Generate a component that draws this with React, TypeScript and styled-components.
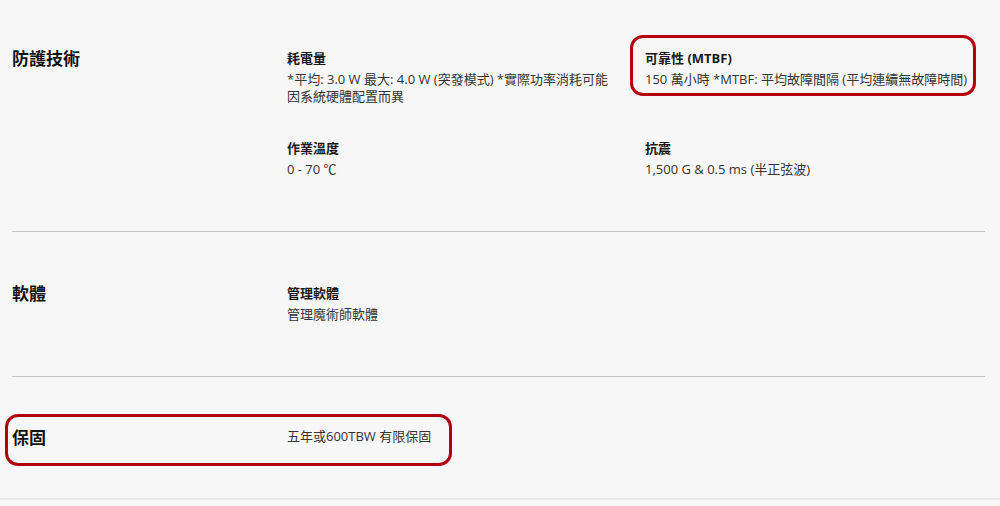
import React from "react";
import styled, { createGlobalStyle } from "styled-components";

const GlobalStyle = createGlobalStyle`
  html, body {
    margin: 0;
    padding: 0;
    background: #f7f7f7;
  }
  body {
    font-family: "Open Sans", "Noto Sans CJK TC", sans-serif;
    color: #222;
  }
`;

const Page = styled.div`
  width: 1000px;
  height: 506px;
  overflow: hidden;
  background: #f7f7f7;
`;

const Content = styled.div`
  padding: 0 15px 0 12px;
`;

const Section = styled.section<{ $top: number; $bottom: number }>`
  display: grid;
  grid-template-columns: 275px 1fr;
  padding: ${(p) => p.$top}px 0 ${(p) => p.$bottom}px;
  position: relative;
`;

const Divider = styled.hr`
  margin: 0;
  border: 0;
  border-top: 1px solid #c4c4c4;
`;

const Title = styled.h3`
  margin: -3px 0 0;
  font-family: "Noto Sans CJK TC", sans-serif;
  font-size: 17px;
  line-height: 24px;
  font-weight: 700;
  color: #111;
`;

const ItemGrid = styled.div`
  display: grid;
  grid-template-columns: 358px 1fr;
  row-gap: 34px;
  align-items: start;
`;

const Item = styled.div<{ $pad?: number }>`
  position: relative;
  padding-right: ${(p) => p.$pad ?? 0}px;
`;

const Label = styled.div`
  font-family: "Open Sans", "Noto Sans CJK TC", sans-serif;
  font-size: 13px;
  line-height: 18px;
  font-weight: 700;
  color: #1a1a1a;
  margin-bottom: 4px;
`;

const Value = styled.div<{ $max?: number }>`
  font-family: "Open Sans", "Noto Sans CJK TC", sans-serif;
  font-size: 13px;
  line-height: 17px;
  color: #333;
  max-width: ${(p) => (p.$max ? `${p.$max}px` : "none")};
`;

const WarrantyValue = styled(Value)`
  align-self: start;
`;

const Annotation = styled.span<{ $t: number; $l: number; $r: number; $b: number }>`
  position: absolute;
  top: ${(p) => p.$t}px;
  left: ${(p) => p.$l}px;
  right: ${(p) => p.$r}px;
  bottom: ${(p) => p.$b}px;
  border: 3px solid #b3000c;
  border-radius: 13px;
  pointer-events: none;
`;

const WarrantyRow = styled.div`
  position: relative;
  display: grid;
  grid-template-columns: 275px 1fr;
  grid-column: 1 / -1;
`;

const FooterLine = styled.div`
  height: 2px;
  background: #e6e6e6;
`;

export default function App() {
  return (
    <Page>
      <GlobalStyle />
      <Content>
        <Section $top={49} $bottom={53}>
          <Title>防護技術</Title>
          <ItemGrid>
            <Item $pad={30}>
              <Label>耗電量</Label>
              <Value $max={328}>
                *平均: 3.0 W 最大: 4.0 W (突發模式) *實際功率消耗可能因系統硬體配置而異
              </Value>
            </Item>
            <Item>
              <Label>可靠性 (MTBF)</Label>
              <Value>150 萬小時 *MTBF: 平均故障間隔 (平均連續無故障時間)</Value>
              <Annotation $t={-14} $l={-15} $r={9} $b={-8} />
            </Item>
            <Item $pad={30}>
              <Label>作業溫度</Label>
              <Value>0 - 70 ℃</Value>
            </Item>
            <Item>
              <Label>抗震</Label>
              <Value>1,500 G &amp; 0.5 ms (半正弦波)</Value>
            </Item>
          </ItemGrid>
        </Section>
        <Divider />
        <Section $top={52} $bottom={53}>
          <Title>軟體</Title>
          <ItemGrid>
            <Item $pad={30}>
              <Label>管理軟體</Label>
              <Value>管理魔術師軟體</Value>
            </Item>
          </ItemGrid>
        </Section>
        <Divider />
        <Section $top={51} $bottom={49}>
          <WarrantyRow>
            <Title>保固</Title>
            <WarrantyValue>五年或600TBW 有限保固</WarrantyValue>
            <Annotation $t={-14} $l={-7} $r={533} $b={-17} />
          </WarrantyRow>
        </Section>
      </Content>
      <FooterLine />
    </Page>
  );
}
